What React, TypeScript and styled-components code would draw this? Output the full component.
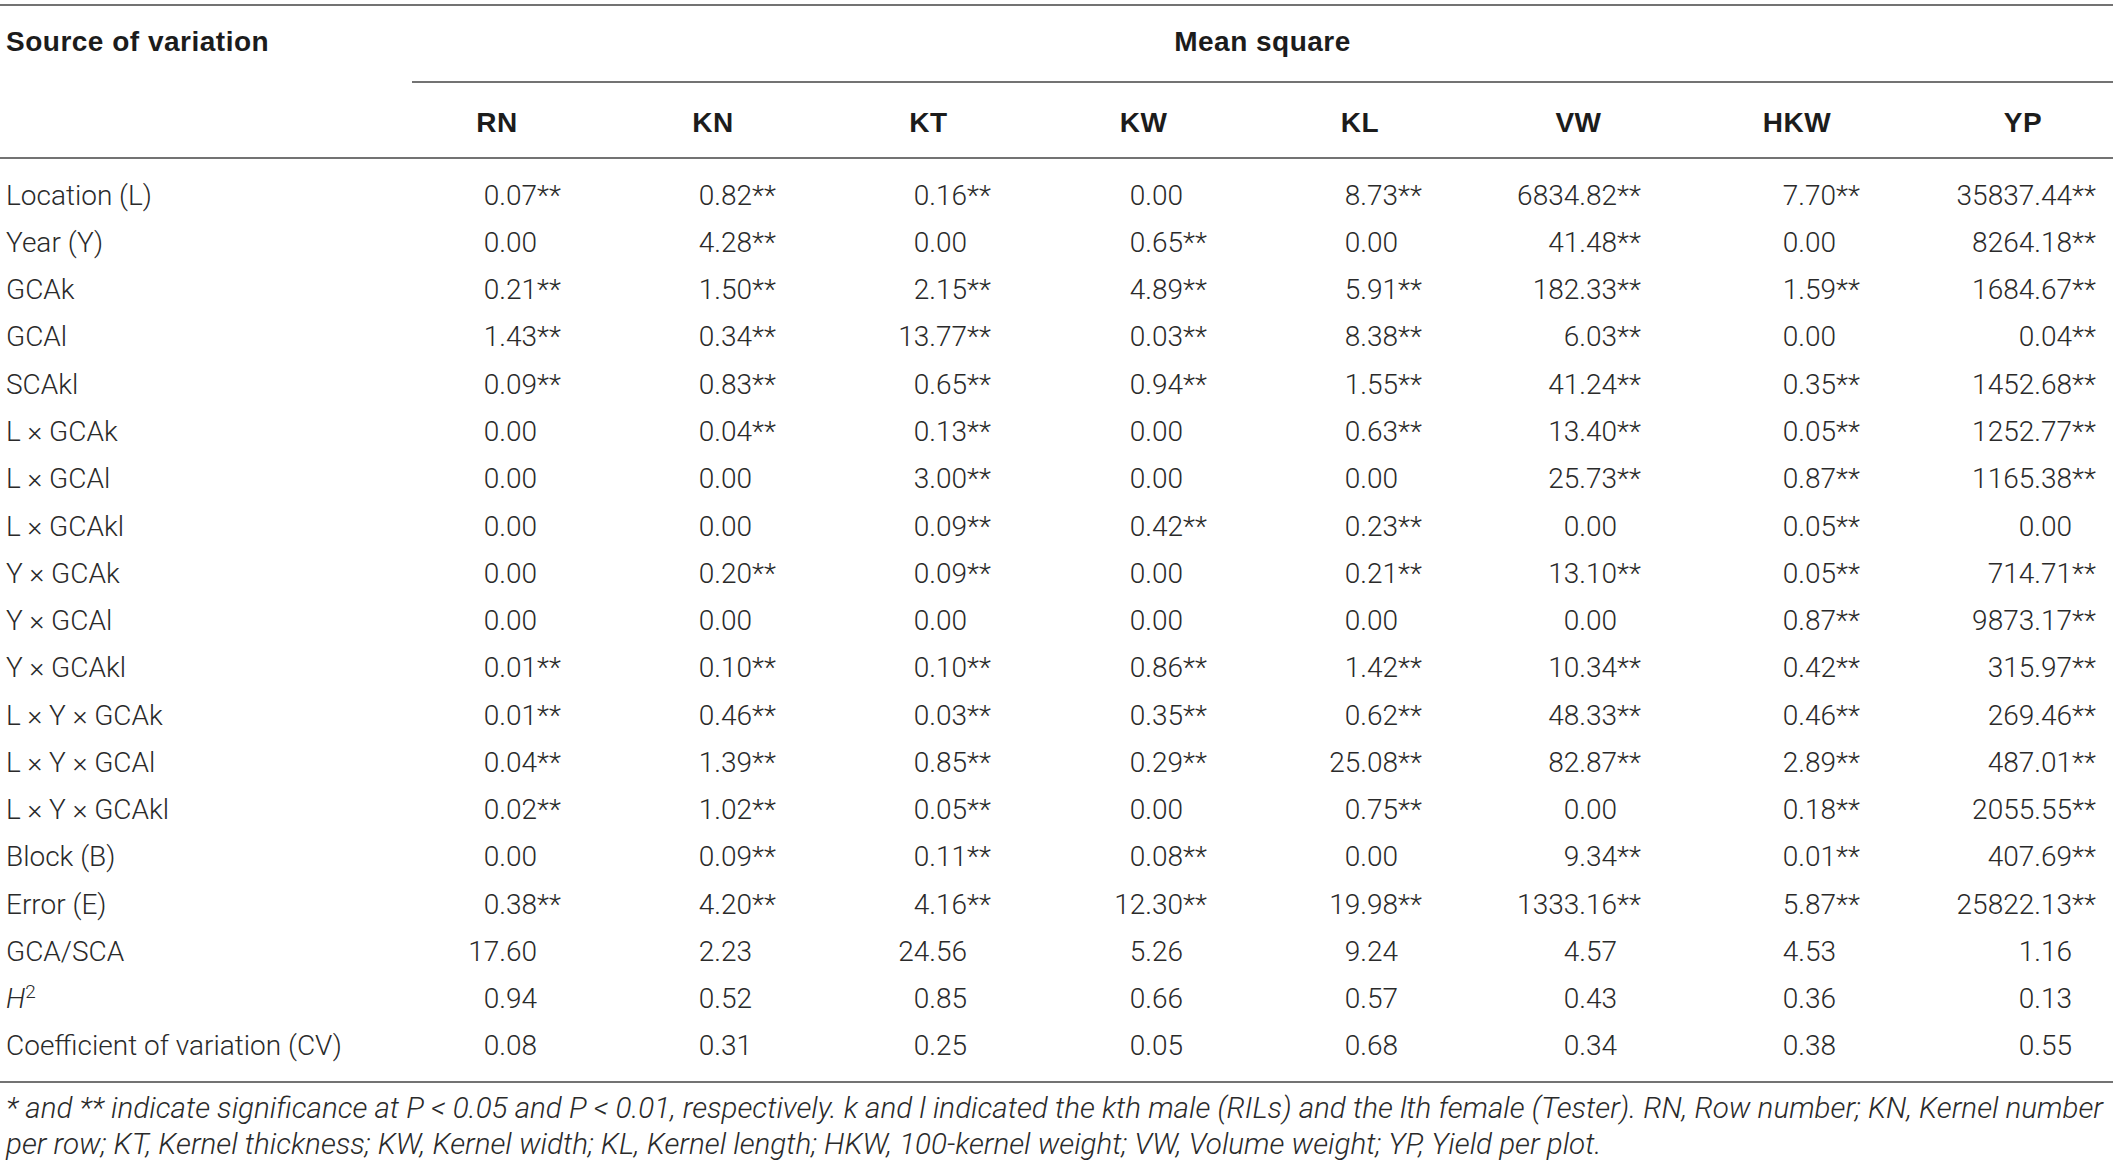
import React from "react";
import styled, { createGlobalStyle } from "styled-components";

const GlobalStyle = createGlobalStyle`
  html, body { margin: 0; padding: 0; background: #ffffff; }
  body { font-family: Roboto, "Liberation Sans", Arial, sans-serif; color: #2a2a2a; }
`;

type Col = { key: string; w: number; pr: number; hl?: number; hr?: number };

const COLS: Col[] = [
  { key: "RN", w: 216, pr: 68 },
  { key: "KN", w: 216, pr: 69 },
  { key: "KT", w: 215, pr: 69 },
  { key: "KW", w: 215, pr: 68 },
  { key: "KL", w: 218, pr: 71 },
  { key: "VW", w: 219, pr: 71 },
  { key: "HKW", w: 222, pr: 74, hr: 4 },
  { key: "YP", w: 203, pr: 41, hl: 23 },
];

const TEMPLATE = `389px ${COLS.map((c) => `${c.w}px`).join(" ")}`;

const LINE = "#737373";

const Page = styled.div`
  width: 2113px;
  padding-top: 4px;
`;

const Header = styled.div`
  display: grid;
  grid-template-columns: ${TEMPLATE};
  border-top: 2px solid ${LINE};
  font-family: "Liberation Sans", Arial, sans-serif;
  font-weight: 700;
  font-size: 28px;
  line-height: 32px;
  letter-spacing: 0.5px;
  color: #1c1c1c;
`;

const TopLabel = styled.div`
  grid-column: 1 / 2;
  height: 77px;
  box-sizing: border-box;
  padding: 20px 0 0 6px;
  white-space: nowrap;
`;

const SpanHead = styled.div`
  grid-column: 2 / -1;
  margin-left: 23px;
  height: 77px;
  box-sizing: border-box;
  padding-top: 20px;
  border-bottom: 2px solid ${LINE};
  text-align: center;
`;

const ColHead = styled.div<{ $pl?: number; $pr?: number }>`
  height: 76px;
  box-sizing: border-box;
  padding: 24px ${(p) => p.$pr ?? 0}px 0 ${(p) => p.$pl ?? 0}px;
  border-bottom: 2px solid ${LINE};
  text-align: center;
`;

const Body = styled.div`
  display: grid;
  grid-template-columns: ${TEMPLATE};
  grid-auto-rows: 47.28px;
  padding: 12.7px 0 11px;
  border-bottom: 2px solid ${LINE};
  font-weight: 300;
  font-size: 28px;
  line-height: 47.28px;
  color: #2a2a2a;
`;

const Label = styled.div`
  padding-left: 6px;
  white-space: nowrap;
`;

const Num = styled.div<{ $pr: number }>`
  text-align: right;
  padding-right: ${(p) => p.$pr}px;
  white-space: nowrap;
`;

const Stars = styled.span`
  display: inline-block;
  width: 0;
  white-space: nowrap;
  overflow: visible;
  text-align: left;
`;

const Sup = styled.sup`
  font-size: 19px;
  line-height: 0;
  vertical-align: super;
`;

const Foot = styled.p`
  margin: 7px 0 0;
  padding-left: 6px;
  font-style: italic;
  font-weight: 300;
  font-size: 29.6px;
  line-height: 36px;
  color: #2a2a2a;
  white-space: nowrap;
`;

type Row = { label: React.ReactNode; vals: string[] };

const ROWS: Row[] = [
  { label: "Location (L)", vals: ["0.07**", "0.82**", "0.16**", "0.00", "8.73**", "6834.82**", "7.70**", "35837.44**"] },
  { label: "Year (Y)", vals: ["0.00", "4.28**", "0.00", "0.65**", "0.00", "41.48**", "0.00", "8264.18**"] },
  { label: "GCAk", vals: ["0.21**", "1.50**", "2.15**", "4.89**", "5.91**", "182.33**", "1.59**", "1684.67**"] },
  { label: "GCAl", vals: ["1.43**", "0.34**", "13.77**", "0.03**", "8.38**", "6.03**", "0.00", "0.04**"] },
  { label: "SCAkl", vals: ["0.09**", "0.83**", "0.65**", "0.94**", "1.55**", "41.24**", "0.35**", "1452.68**"] },
  { label: "L × GCAk", vals: ["0.00", "0.04**", "0.13**", "0.00", "0.63**", "13.40**", "0.05**", "1252.77**"] },
  { label: "L × GCAl", vals: ["0.00", "0.00", "3.00**", "0.00", "0.00", "25.73**", "0.87**", "1165.38**"] },
  { label: "L × GCAkl", vals: ["0.00", "0.00", "0.09**", "0.42**", "0.23**", "0.00", "0.05**", "0.00"] },
  { label: "Y × GCAk", vals: ["0.00", "0.20**", "0.09**", "0.00", "0.21**", "13.10**", "0.05**", "714.71**"] },
  { label: "Y × GCAl", vals: ["0.00", "0.00", "0.00", "0.00", "0.00", "0.00", "0.87**", "9873.17**"] },
  { label: "Y × GCAkl", vals: ["0.01**", "0.10**", "0.10**", "0.86**", "1.42**", "10.34**", "0.42**", "315.97**"] },
  { label: "L × Y × GCAk", vals: ["0.01**", "0.46**", "0.03**", "0.35**", "0.62**", "48.33**", "0.46**", "269.46**"] },
  { label: "L × Y × GCAl", vals: ["0.04**", "1.39**", "0.85**", "0.29**", "25.08**", "82.87**", "2.89**", "487.01**"] },
  { label: "L × Y × GCAkl", vals: ["0.02**", "1.02**", "0.05**", "0.00", "0.75**", "0.00", "0.18**", "2055.55**"] },
  { label: "Block (B)", vals: ["0.00", "0.09**", "0.11**", "0.08**", "0.00", "9.34**", "0.01**", "407.69**"] },
  { label: "Error (E)", vals: ["0.38**", "4.20**", "4.16**", "12.30**", "19.98**", "1333.16**", "5.87**", "25822.13**"] },
  { label: "GCA/SCA", vals: ["17.60", "2.23", "24.56", "5.26", "9.24", "4.57", "4.53", "1.16"] },
  {
    label: (
      <>
        <i>H</i>
        <Sup>2</Sup>
      </>
    ),
    vals: ["0.94", "0.52", "0.85", "0.66", "0.57", "0.43", "0.36", "0.13"],
  },
  { label: "Coefficient of variation (CV)", vals: ["0.08", "0.31", "0.25", "0.05", "0.68", "0.34", "0.38", "0.55"] },
];

function Value({ v, pr }: { v: string; pr: number }) {
  const star = v.indexOf("*");
  const digits = star >= 0 ? v.slice(0, star) : v;
  const stars = star >= 0 ? v.slice(star) : "";
  return (
    <Num $pr={pr}>
      {digits}
      {stars && <Stars>{stars}</Stars>}
    </Num>
  );
}

export default function App() {
  return (
    <Page>
      <GlobalStyle />
      <Header>
        <TopLabel>Source of variation</TopLabel>
        <SpanHead>Mean square</SpanHead>
        <ColHead />
        {COLS.map((c) => (
          <ColHead key={c.key} $pl={c.hl} $pr={c.hr}>
            {c.key}
          </ColHead>
        ))}
      </Header>
      <Body>
        {ROWS.map((r, i) => (
          <React.Fragment key={i}>
            <Label>{r.label}</Label>
            {r.vals.map((v, j) => (
              <Value key={j} v={v} pr={COLS[j].pr} />
            ))}
          </React.Fragment>
        ))}
      </Body>
      <Foot>
        * and ** indicate significance at P &lt; 0.05 and P &lt; 0.01, respectively. k and l indicated the kth male
        (RILs) and the lth female (Tester). RN, Row number; KN, Kernel number
        <br />
        per row; KT, Kernel thickness; KW, Kernel width; KL, Kernel length; HKW, 100-kernel weight; VW, Volume
        weight; YP, Yield per plot.
      </Foot>
    </Page>
  );
}
